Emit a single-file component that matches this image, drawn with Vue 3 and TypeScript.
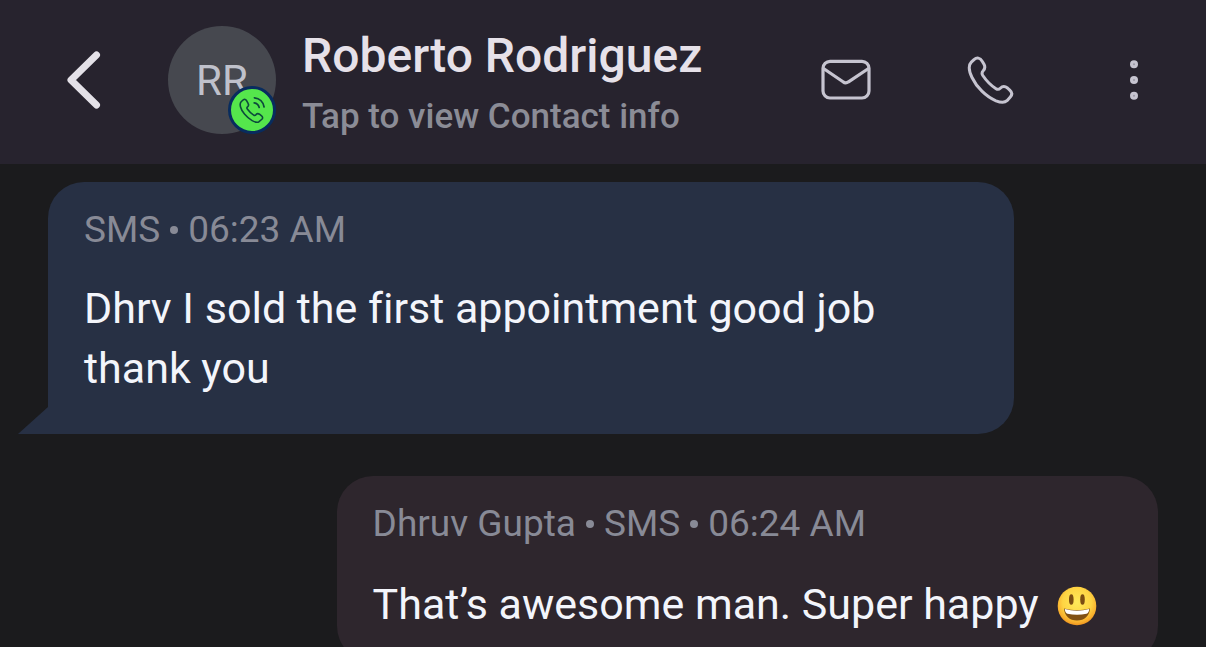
<script setup lang="ts">
interface Message {
  id: number
  direction: 'incoming' | 'outgoing'
  meta: string[]
  lines: string[]
  smile: boolean
}

const contact = { name: 'Roberto Rodriguez', initials: 'RR' }

const messages: Message[] = [
  {
    id: 1,
    direction: 'incoming',
    meta: ['SMS', '06:23 AM'],
    lines: ['Dhrv I sold the first appointment good job', 'thank you'],
    smile: false,
  },
  {
    id: 2,
    direction: 'outgoing',
    meta: ['Dhruv Gupta', 'SMS', '06:24 AM'],
    lines: ['That’s awesome man. Super happy'],
    smile: true,
  },
]
</script>

<template>
  <div class="chat">
    <header class="bar">
      <button class="icon-button back" type="button" aria-label="Back">
        <svg width="36" height="60" viewBox="0 0 36 60" fill="none">
          <path d="M30.500 5 5 30 30.500 55" stroke="#e4e1e8" stroke-width="7" stroke-linecap="round" stroke-linejoin="round" />
        </svg>
      </button>

      <button class="contact" type="button">
        <span class="avatar">
          {{ contact.initials }}
          <span class="badge">
            <svg width="28" height="28" viewBox="0 0 28 28" fill="none" stroke="#0c4a3c" stroke-width="1.7" stroke-linecap="round" stroke-linejoin="round">
              <path transform="translate(0.3 1.4) scale(0.95)" d="M5.3 2.5 3 4.6C.8 7 2.300 12.500 6.500 17.500 11.500 23.500 18 27.200 21.500 25.800L24.800 23C26 21.900 25.700 20.300 24.500 19.400L22.300 17.700C21 16.800 19.600 17 18.700 18.100 17.900 19 17.200 19.300 16.200 18.600 13.500 16.900 11.300 14.700 9.500 12.200 8.800 11.200 9 10.500 9.700 9.900 10.900 8.900 11.100 7.700 10.300 6.400L8.700 3.500C7.900 2.100 6.600 1.500 5.300 2.500Z" />
              <path d="M16.200 6.800C18.800 7.200 20.600 8.900 21.200 11.500M16.400 1.800C21.500 2.300 25.300 6 26.100 11" />
            </svg>
          </span>
        </span>
        <span class="who">
          <span class="name">{{ contact.name }}</span>
          <span class="hint">Tap to view Contact info</span>
        </span>
      </button>

      <nav class="actions" aria-label="Conversation actions">
        <button class="icon-button" type="button" aria-label="Email">
          <svg width="50" height="42" viewBox="0 0 50 42" fill="none" stroke="#c6c4d0" stroke-width="3.200" stroke-linejoin="round">
            <rect x="2" y="2.300" width="46" height="36.700" rx="7" />
            <path d="M2.500 9.500 22 22.800Q24.700 25 27.500 22.800L47.500 9.500" />
          </svg>
        </button>
        <button class="icon-button" type="button" aria-label="Call">
          <svg width="48" height="48" viewBox="0 0 48 48" fill="none" stroke="#c6c4d0" stroke-width="3" stroke-linejoin="round" stroke-linecap="round">
            <path transform="translate(1 0)" d="M7 3.600 4.300 6.200C1.500 9 2 15.200 5 21.500 9.500 31 19 40.700 29 44.800 33.500 46.500 37.500 47 40 44.700L43.300 41C45.300 38.800 45.300 36.500 43 34.400L40.500 32C38 30 35.500 30 33.300 32.200 31.800 33.700 30.600 33.700 29 32.700 23.800 29.400 19.500 25 15.800 19.500 14.400 17.300 14.600 16.400 16.200 14.700 18 12.800 18.200 10.500 17 8.300L15.200 5.200C13.200 1.500 9.700 1.200 7 3.600Z" />
          </svg>
        </button>
        <button class="icon-button" type="button" aria-label="More options">
          <svg width="10" height="42" viewBox="0 0 10 42" fill="#c6c4d0">
            <circle cx="5" cy="5.200" r="4" />
            <circle cx="5" cy="21" r="4" />
            <circle cx="5" cy="36.800" r="4" />
            <g fill="#9a98a5">
              <circle cx="5" cy="5.200" r="1" />
              <circle cx="5" cy="21" r="1" />
              <circle cx="5" cy="36.800" r="1" />
            </g>
          </svg>
        </button>
      </nav>
    </header>

    <main class="thread">
      <article v-for="message in messages" :key="message.id" class="bubble" :class="message.direction">
        <p class="meta">
          <template v-for="(part, index) in message.meta" :key="part">
            <i v-if="index > 0" class="dot"></i><span>{{ part }}</span>
          </template>
        </p>
        <p class="body">
          <template v-for="(line, index) in message.lines" :key="line"><br v-if="index > 0" />{{ line }}</template>
          <svg v-if="message.smile" class="smile" role="img" aria-label="Smiling face" width="40" height="40" viewBox="0 0 40 40">
            <defs>
              <radialGradient id="face" cx="0.5" cy="0.4" r="0.62">
                <stop offset="0" stop-color="#ffe95a" />
                <stop offset="0.6" stop-color="#fed443" />
                <stop offset="0.85" stop-color="#f8ae2c" />
                <stop offset="1" stop-color="#e98a1c" />
              </radialGradient>
            </defs>
            <circle cx="20" cy="20" r="19.300" fill="url(#face)" />
            <ellipse cx="14.300" cy="13.500" rx="2.300" ry="5.300" fill="#7b4c12" />
            <ellipse cx="25.500" cy="13.500" rx="2.300" ry="5.300" fill="#7b4c12" />
            <path d="M7 22.500Q20 26 33 22.500C32.500 30 27.500 34.500 20 34.500S7.500 30 7 22.500Z" fill="#805014" />
            <path d="M7.800 23Q20 26.400 32.200 23C32 26 31 27.300 29.500 27.700Q20 29.800 10.500 27.700C9 27.300 8 26 7.800 23Z" fill="#fff" />
          </svg>
        </p>
      </article>
    </main>
  </div>
</template>

<style>
body {
  margin: 0;
  background: #1b1b1d;
}
</style>

<style scoped>
.chat {
  display: flex;
  flex-direction: column;
  height: 100vh;
  overflow: hidden;
  background: #1b1b1d;
  font-family: Roboto, "Liberation Sans", sans-serif;
  font-variant-ligatures: none;
}

.bar {
  flex: none;
  display: flex;
  align-items: center;
  box-sizing: border-box;
  padding: 24px 48px 28px 66px;
  background: #27232e;
}

.icon-button,
.contact {
  display: flex;
  align-items: center;
  padding: 0;
  border: 0;
  background: none;
  font: inherit;
  color: inherit;
  cursor: pointer;
}

.icon-button svg,
.badge svg {
  display: block;
}

.contact {
  margin-left: 66px;
  gap: 26px;
  text-align: left;
}

.avatar {
  position: relative;
  display: flex;
  align-items: center;
  justify-content: center;
  width: 108px;
  height: 108px;
  border-radius: 50%;
  background: #46484f;
  color: #bfc1cb;
  font-size: 42px;
}

.badge {
  position: absolute;
  right: 0;
  bottom: 0;
  display: flex;
  align-items: center;
  justify-content: center;
  box-sizing: border-box;
  width: 48px;
  height: 48px;
  border: 3px solid #082c5e;
  border-radius: 50%;
  background: #55e64c;
}

.who {
  display: flex;
  flex-direction: column;
  gap: 14px;
  padding-top: 4px;
}

.name {
  color: #e6e1e9;
  font-size: 48px;
  font-weight: 500;
  line-height: 56px;
}

.hint {
  color: #8b8c96;
  font-size: 35px;
  font-weight: 500;
  line-height: 38px;
}

.actions {
  display: flex;
  align-items: center;
  gap: 96px;
  margin-left: auto;
}

.actions .icon-button {
  justify-content: center;
  width: 48px;
}

.actions svg {
  flex: none;
}

.thread {
  flex: 1;
  display: flex;
  flex-direction: column;
  gap: 42px;
  min-height: 0;
  padding: 18px 48px 0;
  overflow: hidden;
}

.bubble {
  position: relative;
  flex: none;
  box-sizing: border-box;
  padding: 28px 36px;
  border-radius: 36px;
}

.incoming {
  align-self: flex-start;
  width: 87%;
  padding-bottom: 36px;
  border-bottom-left-radius: 0;
  background: #273044;
}

.incoming::before {
  content: "";
  position: absolute;
  right: 100%;
  bottom: 0;
  width: 30px;
  height: 27px;
  background: inherit;
  clip-path: polygon(100% 0, 100% 100%, 0 100%);
}

.outgoing {
  align-self: flex-end;
  width: 74%;
  background: #2e262d;
}

.meta,
.body {
  margin: 0;
}

.meta {
  display: flex;
  align-items: center;
  gap: 10px;
  color: #888a96;
  font-size: 37px;
  line-height: 40px;
}

.dot {
  width: 8px;
  height: 8px;
  border-radius: 50%;
  background: currentColor;
}

.body {
  margin-top: 28px;
  color: #f3f5fb;
  font-size: 43px;
  line-height: 60px;
}

.outgoing .body {
  margin-top: 30px;
}

.smile {
  margin-left: 18px;
  vertical-align: -7px;
}
</style>
